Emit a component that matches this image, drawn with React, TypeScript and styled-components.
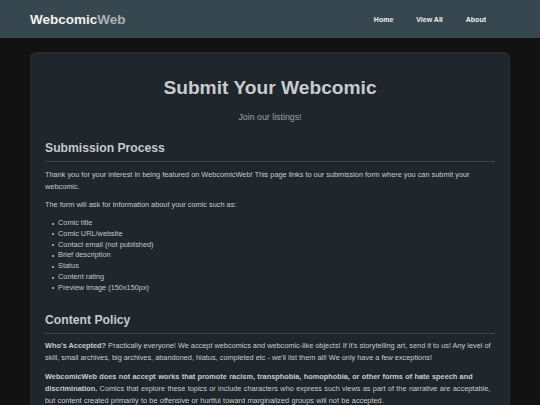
import React from "react";
import styled, { createGlobalStyle } from "styled-components";

const Global = createGlobalStyle`
  html, body { margin: 0; padding: 0; background: #121212; }
  body { font-family: "Liberation Sans", Arial, sans-serif; color: #c8ccd0; }
`;

const Header = styled.header`
  height: 38px;
  background: #37474f;
  display: flex;
  align-items: center;
  justify-content: space-between;
  padding: 0 30px;
  box-sizing: border-box;
`;

const Logo = styled.div`
  font-size: 13.5px;
  font-weight: bold;
  color: #f0f0f0;
`;

const LogoAccent = styled.span`
  color: #a9b0b4;
`;

const Nav = styled.nav`
  display: flex;
  gap: 23px;
  padding-right: 24px;
`;

const NavLink = styled.a`
  font-size: 7px;
  font-weight: bold;
  color: #eef0f1;
  text-decoration: none;
`;

const Main = styled.main`
  padding: 14px 30px 0;
`;

const Card = styled.section`
  background: #1f262c;
  border-radius: 6px;
  border: 1px solid #262e34;
  padding: 14px 14px 20px;
  box-sizing: border-box;
`;

const Title = styled.h1`
  margin: 10px 0 0;
  text-align: center;
  font-size: 19.2px;
  line-height: 22px;
  font-weight: bold;
  color: #c9ccce;
`;

const Subtitle = styled.p`
  margin: 13px 0 0;
  text-align: center;
  font-size: 8.8px;
  line-height: 10px;
  color: #9ca3a8;
`;

const H2 = styled.h2`
  margin: 19px 0 0;
  padding-bottom: 6px;
  border-bottom: 1px solid #3a464e;
  font-size: 12.2px;
  line-height: 14px;
  font-weight: bold;
  color: #c6cacd;
`;

const P = styled.p<{ $loose?: boolean }>`
  margin: 6.5px 0 0;
  font-size: 7.35px;
  line-height: 12px;
  word-spacing: ${(p) => (p.$loose ? "0.3px" : "0")};
  color: #c8ccd0;
`;

const List = styled.ul`
  margin: 7px 0 0;
  padding: 0 0 0 13px;
  list-style: none;
  font-size: 7.35px;
  line-height: 10.8px;
  color: #c3c7ca;
`;

const Item = styled.li`
  position: relative;
  &::before {
    content: "";
    position: absolute;
    left: -6px;
    top: 4.6px;
    width: 2px;
    height: 2px;
    border-radius: 50%;
    background: #c3c7ca;
  }
`;

const Strong = styled.strong`
  font-weight: bold;
  color: #c9cdd0;
`;

const items = [
  "Comic title",
  "Comic URL/website",
  "Contact email (not published)",
  "Brief description",
  "Status",
  "Content rating",
  "Preview image (150x150px)",
];

export default function App() {
  return (
    <>
      <Global />
      <Header>
        <Logo>
          Webcomic<LogoAccent>Web</LogoAccent>
        </Logo>
        <Nav>
          <NavLink href="#">Home</NavLink>
          <NavLink href="#">View All</NavLink>
          <NavLink href="#">About</NavLink>
        </Nav>
      </Header>
      <Main>
        <Card>
          <Title>Submit Your Webcomic</Title>
          <Subtitle>Join our listings!</Subtitle>
          <H2>Submission Process</H2>
          <P>
            Thank you for your interest in being featured on WebcomicWeb! This page links to our
            submission form where you can submit your webcomic.
          </P>
          <P>The form will ask for information about your comic such as:</P>
          <List>
            {items.map((t) => (
              <Item key={t}>{t}</Item>
            ))}
          </List>
          <H2>Content Policy</H2>
          <P>
            <Strong>Who's Accepted?</Strong> Practically everyone! We accept webcomics and
            webcomic-like objects! If it's storytelling art, send it to us! Any level of skill,
            small archives, big archives, abandoned, hiatus, completed etc - we'll list them all!
            We only have a few exceptions!
          </P>
          <P $loose>
            <Strong>
              WebcomicWeb does not accept works that promote racism, transphobia, homophobia, or
              other forms of hate speech and discrimination.
            </Strong>{" "}
            Comics that explore these topics or include characters who express such views as part
            of the narrative are acceptable,
            <br />
            but content created primarily to be offensive or hurtful toward marginalized groups
            will not be accepted.
          </P>
        </Card>
      </Main>
    </>
  );
}
